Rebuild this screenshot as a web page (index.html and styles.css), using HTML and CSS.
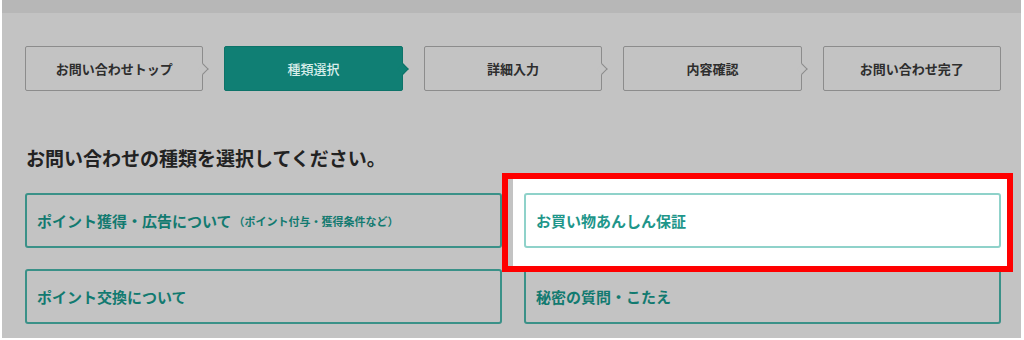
FILE: index.html
```html
<!DOCTYPE html>
<html lang="ja">
<head>
<meta charset="utf-8">
<title>お問い合わせ</title>
<link rel="stylesheet" href="styles.css">
</head>
<body>
<div class="page">
  <div class="topband"></div>
  <div class="content">
    <ol class="steps">
      <li class="step">お問い合わせトップ</li>
      <li class="step current">種類選択</li>
      <li class="step">詳細入力</li>
      <li class="step">内容確認</li>
      <li class="step last">お問い合わせ完了</li>
    </ol>
    <h2 class="heading">お問い合わせの種類を選択してください。</h2>
    <div class="options">
      <div class="cell"><div class="option">ポイント獲得・広告について<span class="sub">（ポイント付与・獲得条件など）</span></div></div>
      <div class="cell marked"><div class="option active">お買い物あんしん保証</div></div>
      <div class="cell"><div class="option">ポイント交換について</div></div>
      <div class="cell"><div class="option">秘密の質問・こたえ</div></div>
    </div>
  </div>
</div>
</body>
</html>
```
FILE: styles.css
```css
html, body {
  margin: 0;
  padding: 0;
  background: #ffffff;
}
body {
  font-family: "Noto Sans CJK JP", "Noto Sans", sans-serif;
}
.page {
  margin: 0 3px 0 2px;
  height: 338px;
  background: #c3c3c3;
  overflow: hidden;
}
.topband {
  height: 13px;
  background: #b7b7b7;
}
.content {
  padding: 33px 0 0 23px;
}
.steps {
  list-style: none;
  margin: 0;
  padding: 0;
  width: 976px;
  display: grid;
  grid-template-columns: repeat(5, 1fr);
  column-gap: 21px;
}
.step {
  position: relative;
  box-sizing: border-box;
  height: 45px;
  border: 1.5px solid #8c8c8c;
  border-radius: 2px;
  display: flex;
  align-items: center;
  justify-content: center;
  font-size: 13px;
  font-weight: 700;
  color: #2e2e2e;
  background: #c3c3c3;
}
.step::after {
  content: "";
  position: absolute;
  top: 50%;
  right: -5px;
  width: 7px;
  height: 7px;
  background: #c3c3c3;
  border-top: 1.5px solid #8c8c8c;
  border-right: 1.5px solid #8c8c8c;
  transform: translateY(-50%) rotate(45deg);
}
.step.last::after {
  display: none;
}
.step.current {
  background: #107f74;
  border-color: #0d7369;
  color: #d9eeeb;
  font-weight: 500;
}
.step.current::after {
  background: #107f74;
  border-color: #0d7369;
}
.heading {
  margin: 54px 0 0 1px;
  font-size: 19px;
  line-height: 26px;
  font-weight: 700;
  color: #222222;
}
.options {
  margin-top: 22px;
  width: 976px;
  display: grid;
  grid-template-columns: 1fr 1fr;
  column-gap: 22px;
  row-gap: 21px;
}
.cell {
  height: 55px;
}
.option {
  box-sizing: border-box;
  height: 55px;
  border: 2px solid #3a9188;
  border-radius: 3px;
  display: flex;
  align-items: center;
  padding-left: 10px;
  font-size: 15px;
  font-weight: 700;
  color: #127a70;
}
.sub {
  font-size: 11px;
  margin-left: 2px;
}
.cell.marked {
  position: relative;
  z-index: 1;
}
.cell.marked::before {
  content: "";
  position: absolute;
  left: -22px;
  right: -12px;
  top: -20px;
  bottom: -24px;
  border: 6px solid #ff0000;
  background: #ffffff;
  box-shadow: inset 5px 0 0 #c3c3c3;
  z-index: -1;
}
.option.active {
  background: #ffffff;
  border-color: #8fd2ca;
  color: #1e968a;
}
```
